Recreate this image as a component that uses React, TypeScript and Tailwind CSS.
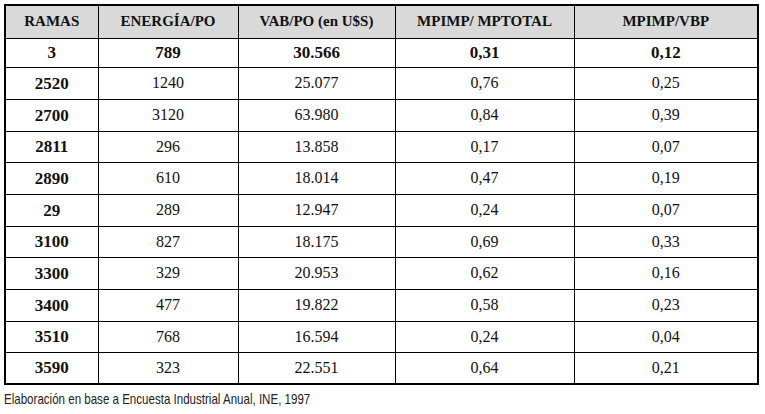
const rows: [string, string, string, string, string][] = [
  ['3', '789', '30.566', '0,31', '0,12'],
  ['2520', '1240', '25.077', '0,76', '0,25'],
  ['2700', '3120', '63.980', '0,84', '0,39'],
  ['2811', '296', '13.858', '0,17', '0,07'],
  ['2890', '610', '18.014', '0,47', '0,19'],
  ['29', '289', '12.947', '0,24', '0,07'],
  ['3100', '827', '18.175', '0,69', '0,33'],
  ['3300', '329', '20.953', '0,62', '0,16'],
  ['3400', '477', '19.822', '0,58', '0,23'],
  ['3510', '768', '16.594', '0,24', '0,04'],
  ['3590', '323', '22.551', '0,64', '0,21'],
];

const headers = ['RAMAS', 'ENERGÍA/PO', 'VAB/PO (en U$S)', 'MPIMP/ MPTOTAL', 'MPIMP/VBP'];
const widths = ['w-[93px]', 'w-[140px]', 'w-[157px]', 'w-[179px]', 'w-[184px]'];

export default function App() {
  return (
    <div className="w-[765px] h-[414px] bg-white pt-[4px] pl-[4px] text-[#111]">
      <table
        className="border-collapse border-2 border-black w-[753px] table-fixed"
        style={{ fontFamily: '"Liberation Serif", "DejaVu Serif", serif' }}
      >
        <colgroup>
          {widths.map((w, i) => (
            <col key={i} className={w} />
          ))}
        </colgroup>
        <thead>
          <tr className="h-[33px] bg-[#d9d9d9]">
            {headers.map((h) => (
              <th key={h} className="border border-black text-[15px] font-bold text-center p-0 leading-none">
                {h}
              </th>
            ))}
          </tr>
        </thead>
        <tbody>
          {rows.map((r, i) => (
            <tr key={r[0]} className={i === 0 ? 'h-[29px]' : i % 3 === 0 ? 'h-[31px]' : 'h-[32px]'}>
              {r.map((c, j) => (
                <td
                  key={j}
                  className={
                    'border border-black text-center p-0 leading-none ' +
                    (i === 0 || j === 0 ? 'font-bold text-[17px]' : 'text-[16px]')
                  }
                >
                  {c}
                </td>
              ))}
            </tr>
          ))}
        </tbody>
      </table>
      <div className="mt-[5px] h-[15px] leading-none">
        <span
          className="inline-block origin-left scale-x-[0.77] text-[15px] text-[#222] whitespace-nowrap"
          style={{ fontFamily: '"Liberation Sans", Arial, sans-serif' }}
        >
          Elaboración en base a Encuesta Industrial Anual, INE, 1997
        </span>
      </div>
    </div>
  );
}
